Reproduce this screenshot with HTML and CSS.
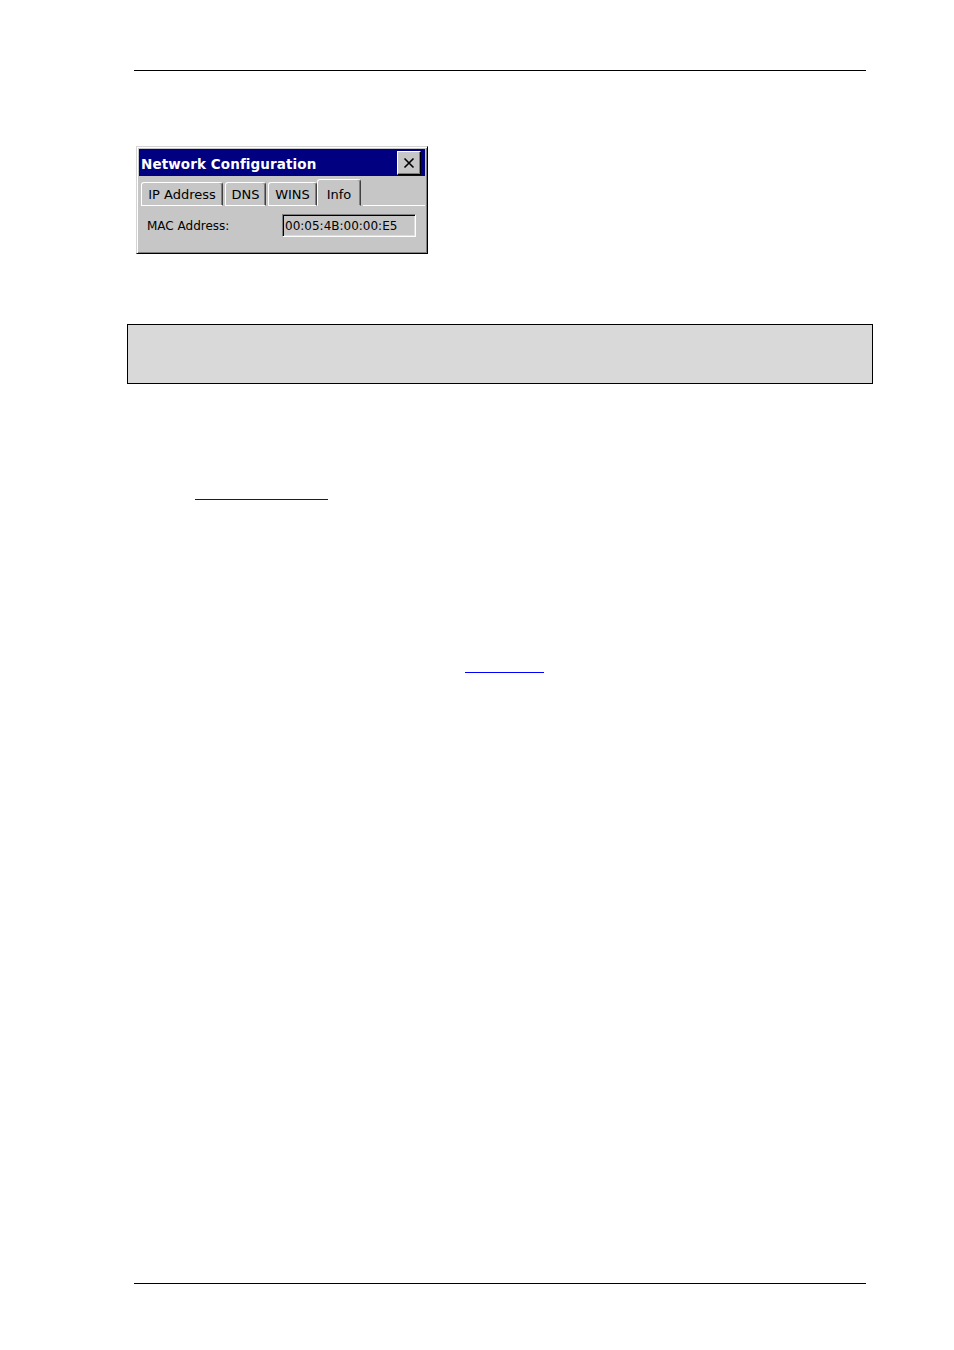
FILE: index.html
```html
<!DOCTYPE html>
<html>
<head>
<meta charset="utf-8">
<link rel="stylesheet" href="styles.css">
</head>
<body>
<div class="page">
  <div class="rule rule-top"></div>

  <div class="dlg">
    <div class="title">
      <span class="title-text">Network Configuration</span>
      <span class="close"><svg width="12" height="12" viewBox="0 0 12 12"><path d="M1.5 1.5 L10.5 10.5 M10.5 1.5 L1.5 10.5" stroke="#000" stroke-width="1.6" fill="none"/></svg></span>
    </div>
    <div class="tabs">
      <div class="tab tab-ip">IP Address</div>
      <div class="tab tab-dns">DNS</div>
      <div class="tab tab-wins">WINS</div>
      <div class="tab tab-info active">Info</div>
      <div class="tab-rest"></div>
    </div>
    <div class="panel">
      <span class="label">MAC Address:</span>
      <span class="field">00:05:4B:00:00:E5</span>
    </div>
  </div>

  <div class="band"></div>

  <div class="link-row link-row-1"><a class="link link-1" href="#">&nbsp;</a></div>
  <div class="link-row link-row-2"><a class="link link-2" href="#">&nbsp;</a></div>

  <div class="rule rule-bottom"></div>
</div>
</body>
</html>
```

FILE: styles.css
```css
html, body {
  margin: 0;
  padding: 0;
  background: #fff;
}
body {
  font-family: "DejaVu Sans", "Liberation Sans", sans-serif;
}
.page {
  width: 954px;
  height: 1350px;
  position: relative;
  overflow: hidden;
}
.rule {
  border-top: 1px solid #000;
  margin-left: 134px;
  width: 732px;
  height: 0;
}
.rule-top {
  margin-top: 70px;
}
.dlg {
  margin-top: 75px;
  margin-left: 136px;
  width: 292px;
  height: 108px;
  box-sizing: border-box;
  background: #c6c6c6;
  border: 1px solid;
  border-color: #d4d4d4 #000 #000 #d4d4d4;
  box-shadow: inset 1px 1px 0 #fff, inset -1px -1px 0 #808080;
  padding: 2px;
}
.title {
  height: 27px;
  background: #000080;
  display: flex;
  align-items: center;
  justify-content: space-between;
  padding-left: 2px;
  padding-right: 4px;
}
.title-text {
  color: #fff;
  font-weight: bold;
  font-size: 13.5px;
  letter-spacing: 0.1px;
  padding-top: 2px;
}
.close {
  width: 24px;
  height: 24px;
  box-sizing: border-box;
  background: #c6c6c6;
  border: 1px solid;
  border-color: #fff #000 #000 #fff;
  box-shadow: inset -1px -1px 0 #808080;
  display: flex;
  align-items: center;
  justify-content: center;
}
.tabs {
  display: flex;
  align-items: flex-end;
  height: 26px;
  margin-top: 4px;
  padding-left: 2px;
}
.tab {
  height: 24px;
  box-sizing: border-box;
  border: 1px solid;
  border-color: #fff #404040 #fff #fff;
  box-shadow: inset -1px 0 0 #808080;
  border-radius: 3px 3px 0 0;
  font-size: 13px;
  color: #000;
  display: flex;
  align-items: center;
  justify-content: center;
  border-bottom: 1px solid #fff;
  margin-right: 2px;
  padding-top: 1px;
}
.tab-ip { width: 82px; }
.tab-dns { width: 41px; }
.tab-wins { width: 49px; margin-right: 0; }
.tab-info {
  width: 44px;
  height: 27px;
  padding-top: 4px;
  border-bottom-color: #c6c6c6;
}
.tab-rest {
  flex: 1;
  height: 0;
  border-bottom: 1px solid #fff;
}
.panel {
  height: 42px;
  display: flex;
  align-items: center;
  padding-left: 8px;
  padding-bottom: 3px;
  box-sizing: border-box;
}
.label {
  font-size: 12px;
  color: #000;
  width: 135px;
}
.field {
  width: 134px;
  height: 23px;
  box-sizing: border-box;
  border: 1px solid;
  border-color: #808080 #fff #fff #808080;
  box-shadow: inset 1px 1px 0 #000, inset -1px -1px 0 #dcdcdc;
  font-size: 12px;
  color: #000;
  display: flex;
  align-items: center;
  padding-left: 2px;
  background: #c6c6c6;
}
.band {
  margin-top: 70px;
  margin-left: 127px;
  width: 746px;
  height: 60px;
  box-sizing: border-box;
  background: #d9d9d9;
  border: 1px solid #000;
}
.link-row {
  height: 0;
}
.link {
  display: inline-block;
  height: 14px;
  border-bottom: 1px solid #0000ff;
  color: #0000ff;
  text-decoration: none;
  font-size: 12px;
  line-height: 14px;
  vertical-align: top;
}
.link-row-1 {
  margin-top: 101px;
  padding-left: 195px;
  height: 15px;
}
.link-1 { width: 133px; }
.link-row-2 {
  margin-top: 158px;
  padding-left: 465px;
  height: 15px;
}
.link-2 { width: 79px; }
.rule-bottom {
  margin-top: 610px;
}
```
